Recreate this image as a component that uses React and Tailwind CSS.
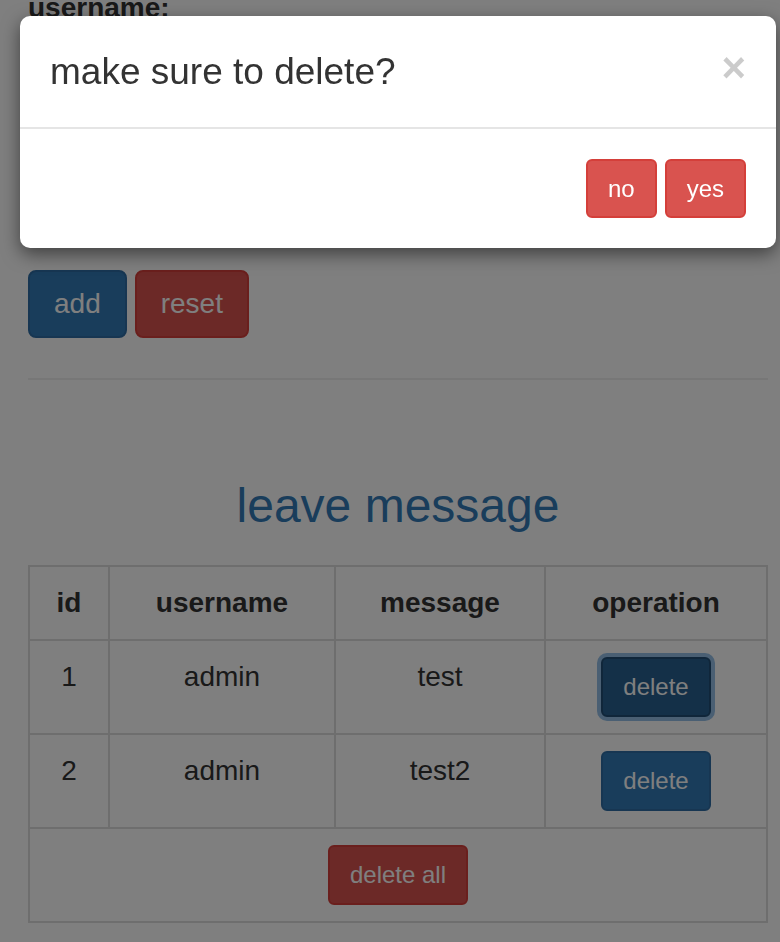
import React from 'react';

const rows = [
  { id: 1, username: 'admin', message: 'test', focused: true },
  { id: 2, username: 'admin', message: 'test2', focused: false },
];

const App = () => {
  return (
    <div className="relative min-h-screen bg-white text-[#333] font-['Liberation_Sans',Arial,sans-serif] overflow-hidden">
      {/* page behind the modal */}
      <div className="px-[28px]">
        <div className="h-[282px]">
          <label className="block -mt-[12px] text-[28px] leading-[40px] font-bold">username:</label>
          <div className="mt-[10px] h-[68px] border-2 border-[#ccc] rounded-[8px]"></div>
          <label className="block mt-[30px] text-[28px] leading-[40px] font-bold">message:</label>
        </div>

        <div className="flex gap-[8px]">
          <button className="h-[68px] px-[24px] text-[28px] text-white bg-[#337ab7] border-2 border-[#2e6da4] rounded-[8px]">
            add
          </button>
          <button className="h-[68px] px-[24px] text-[28px] text-white bg-[#d9534f] border-2 border-[#d43f3a] rounded-[8px]">
            reset
          </button>
        </div>

        <hr className="mt-[40px] w-[740px] border-0 border-t-2 border-[#eee]" />

        <h3 className="mt-[99px] mb-[33px] w-[740px] text-center text-[48px] leading-[53px] text-[#337ab7]">
          leave message
        </h3>

        <table className="w-[740px] table-fixed border-collapse border-2 border-[#ddd] text-[28px] leading-[40px]">
          <thead>
            <tr>
              <th className="w-[80px] border-2 border-[#ddd] p-[16px] font-bold text-center">id</th>
              <th className="w-[226px] border-2 border-[#ddd] p-[16px] font-bold text-center">username</th>
              <th className="w-[210px] border-2 border-[#ddd] p-[16px] font-bold text-center">message</th>
              <th className="border-2 border-[#ddd] p-[16px] font-bold text-center">operation</th>
            </tr>
          </thead>
          <tbody>
            {rows.map((row) => (
              <tr key={row.id}>
                <td className="border-2 border-[#ddd] p-[16px] text-center align-top">{row.id}</td>
                <td className="border-2 border-[#ddd] p-[16px] text-center align-top">{row.username}</td>
                <td className="border-2 border-[#ddd] p-[16px] text-center align-top">{row.message}</td>
                <td className="border-2 border-[#ddd] p-[16px] text-center align-top">
                  <button
                    className={
                      row.focused
                        ? 'h-[60px] px-[20px] text-[24px] leading-[34px] text-white bg-[#286090] border-2 border-[#204d74] rounded-[6px] shadow-[0_0_0_4px_rgba(91,157,217,0.65)]'
                        : 'h-[60px] px-[20px] text-[24px] leading-[34px] text-white bg-[#337ab7] border-2 border-[#2e6da4] rounded-[6px]'
                    }
                  >
                    delete
                  </button>
                </td>
              </tr>
            ))}
            <tr>
              <td colSpan={4} className="border-2 border-[#ddd] p-[16px] text-center">
                <button className="h-[60px] px-[20px] text-[24px] leading-[34px] text-white bg-[#d9534f] border-2 border-[#d43f3a] rounded-[6px]">
                  delete all
                </button>
              </td>
            </tr>
          </tbody>
        </table>
        <div className="h-[40px]"></div>
      </div>

      {/* backdrop */}
      <div className="fixed inset-0 bg-black/50"></div>

      {/* modal */}
      <div className="fixed left-[20px] top-[16px] w-[756px] bg-white rounded-[10px] shadow-[0_6px_18px_rgba(0,0,0,0.5)]">
        <div className="flex items-start justify-between px-[30px] py-[30px] border-b-2 border-[#e5e5e5]">
          <h4 className="text-[37px] leading-[51px] text-[#333]">make sure to delete?</h4>
          <button className="-mt-[4px] text-[42px] leading-[51px] font-bold text-black opacity-20">×</button>
        </div>
        <div className="flex justify-end gap-[8px] p-[30px]">
          <button className="h-[59px] px-[20px] text-[24px] leading-[34px] text-white bg-[#d9534f] border-2 border-[#d43f3a] rounded-[6px]">
            no
          </button>
          <button className="h-[59px] px-[20px] text-[24px] leading-[34px] text-white bg-[#d9534f] border-2 border-[#d43f3a] rounded-[6px]">
            yes
          </button>
        </div>
      </div>
    </div>
  );
};

export default App;
